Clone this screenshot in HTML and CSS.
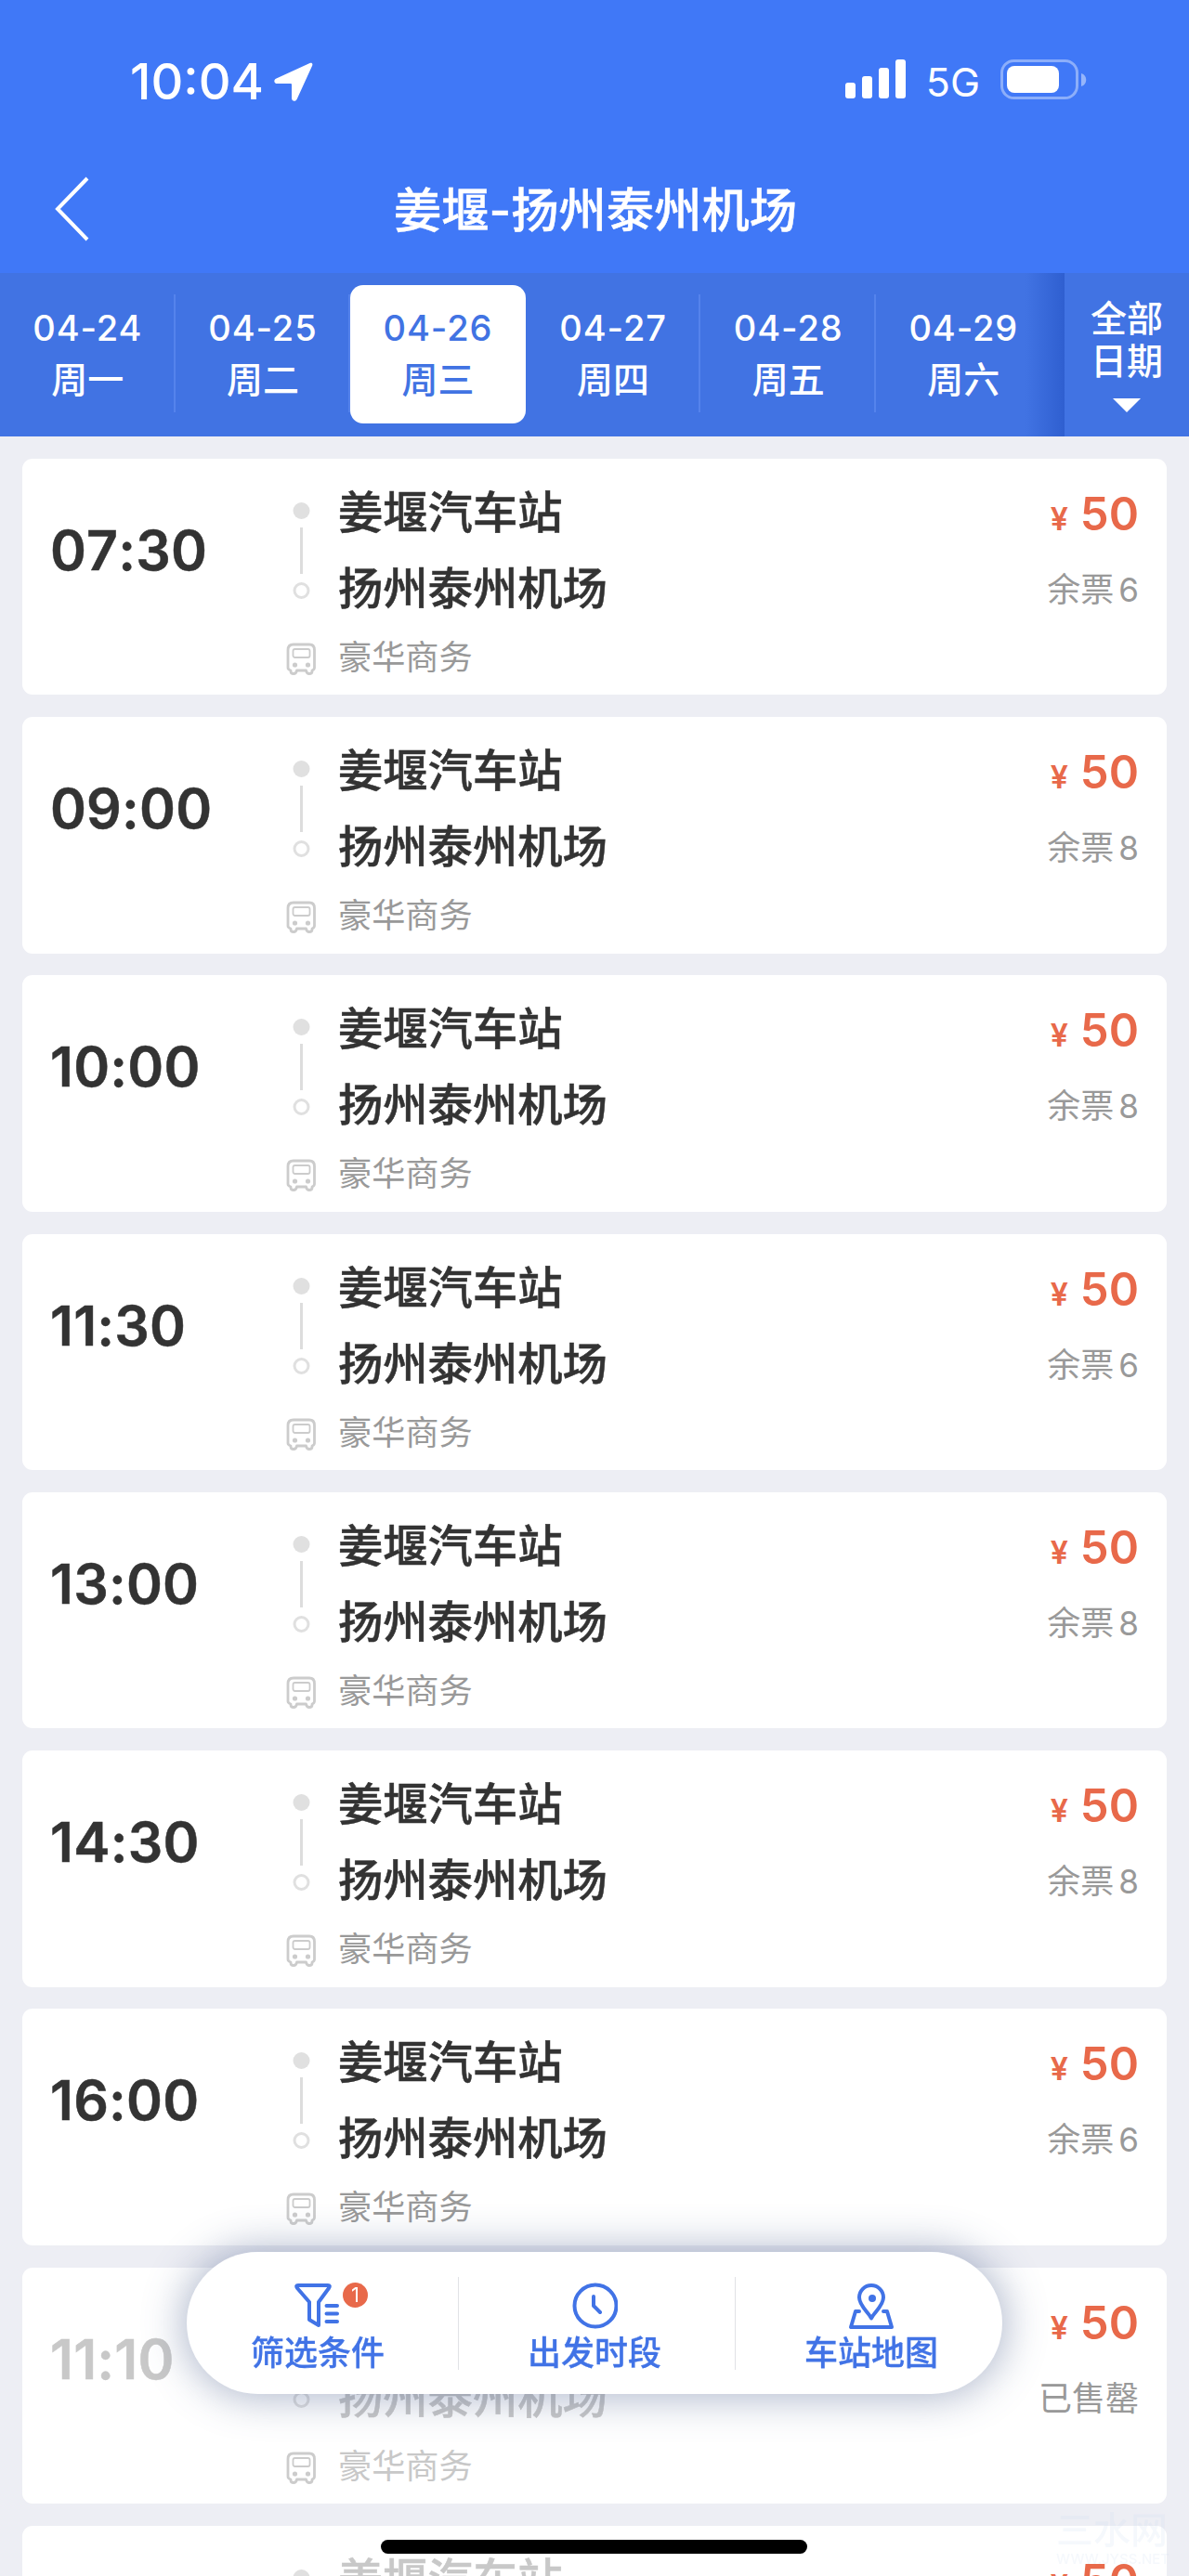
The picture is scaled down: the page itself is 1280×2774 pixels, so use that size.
FILE: index.html
```html
<!doctype html>
<html lang="zh-CN">
  <head>
    <meta charset="UTF-8" />
    <meta name="viewport" content="width=device-width, initial-scale=1.0" />
    <title>姜堰-扬州泰州机场</title>
    <link rel="stylesheet" href="styles.css" />
  </head>
  <body>
    <header class="header">
      <div class="status-bar">
        <div class="status-left">
          <span class="clock">10:04</span>
          <svg class="location" width="42" height="42" viewBox="0 0 42 42">
            <path d="M38.5 1 2.5 17.5C-.8 19-.2 23 3.5 23H18q1 0 1 1V38.5c0 3.800 4.300 4.500 5.800 1L41 4C42.200 1.500 40.500 0 38.500 1Z" fill="#fff" />
          </svg>
        </div>
        <div class="status-right">
          <svg width="65" height="42" viewBox="0 0 65 42" fill="#fff">
            <rect x="0" y="25" width="11" height="17" rx="3" />
            <rect x="18" y="18" width="11" height="24" rx="3" />
            <rect x="36" y="9" width="11" height="33" rx="3" />
            <rect x="54" y="0" width="11" height="42" rx="3" />
          </svg>
          <span class="network">5G</span>
          <svg width="93" height="44" viewBox="0 0 93 44">
            <rect x="1.500" y="1.500" width="81" height="40" rx="13" fill="none" stroke="#fff" stroke-opacity=".4" stroke-width="3" />
            <rect x="7" y="7" width="56" height="29" rx="8" fill="#fff" />
            <path d="M87 15c7 2 7 12 0 14Z" fill="#fff" fill-opacity=".45" />
          </svg>
        </div>
      </div>
      <div class="nav-bar">
        <svg class="back" width="38" height="70" viewBox="0 0 38 70">
          <path d="M36 2 4 35 36 68" fill="none" stroke="#fff" stroke-width="4" />
        </svg>
        <h1>姜堰-扬州泰州机场</h1>
      </div>
    </header>

    <nav class="dates">
      <div class="date-list">
        <div class="date"><span>04-24</span><b>周一</b></div>
        <div class="date"><span>04-25</span><b>周二</b></div>
        <div class="date active"><span>04-26</span><b>周三</b></div>
        <div class="date"><span>04-27</span><b>周四</b></div>
        <div class="date"><span>04-28</span><b>周五</b></div>
        <div class="date"><span>04-29</span><b>周六</b></div>
      </div>
      <div class="all-dates">
        <span>全部</span>
        <span>日期</span>
        <i class="caret"></i>
      </div>
    </nav>

    <main class="trips" id="trips"></main>

    <div class="toolbar">
      <div class="tool">
        <svg width="50" height="50" viewBox="0 0 50 50" fill="none" stroke="#4173e6" stroke-width="4" stroke-linecap="round" stroke-linejoin="round">
          <path d="M4 3H36Q39 3 37 6L26 21V46L16 40V21L3 6Q1 3 4 3Z" />
          <path d="M34.500 25H46M34.500 33.500H46M34.500 42H46" />
        </svg>
        <span>筛选条件</span>
        <em class="badge">1</em>
      </div>
      <div class="tool">
        <svg width="50" height="50" viewBox="0 0 50 50" fill="none" stroke="#4173e6" stroke-width="4" stroke-linecap="round" stroke-linejoin="round">
          <circle cx="26" cy="25" r="22.500" />
          <path d="M24 15V25L31 32" />
        </svg>
        <span>出发时段</span>
      </div>
      <div class="tool">
        <svg width="50" height="50" viewBox="0 0 50 50" fill="none" stroke="#4173e6" stroke-width="4" stroke-linecap="round" stroke-linejoin="round">
          <path d="M25 38.500C22 32 12 25 12 16A13 13 0 0 1 38 16C38 25 28 32 25 38.500Z" />
          <circle cx="26" cy="17" r="4" fill="#4173e6" stroke="none" />
          <path d="M12 31H8L3 48H47L42 31H38" />
        </svg>
        <span>车站地图</span>
      </div>
    </div>
    <div class="watermark">
      <span>三水网</span>
      <small>WWW.JYSS.NET</small>
    </div>
    <div class="home-indicator"></div>

    <script src="main.js"></script>
  </body>
</html>
```
FILE: styles.css
```css
* {
  box-sizing: border-box;
}
body {
  margin: 0;
  height: 2774px;
  overflow: hidden;
  background-color: #edeef4;
  font-family: Inter, "Noto Sans CJK SC", sans-serif;
  color: #333;
}
.header {
  height: 294px;
  background-color: #4078f7;
  color: #fff;
}
.status-bar {
  display: flex;
  justify-content: space-between;
  height: 156px;
  padding: 64px 110px 0 140px;
}
.status-left,
.status-right {
  display: flex;
  align-items: flex-start;
}
.clock {
  font-size: 54px;
  font-weight: 500;
  line-height: 47px;
}
.location {
  margin: 3px 0 0 11px;
}
.network {
  margin: 0 22px 0 22px;
  font-size: 43px;
  line-height: 48px;
}
.nav-bar {
  display: flex;
  align-items: center;
  height: 138px;
  padding: 0 58px;
}
.back {
  flex: none;
}
h1 {
  flex: 1;
  margin: 1px 36px 0 0;
  text-align: center;
  font-size: 51.3px;
  font-weight: 500;
  line-height: 60px;
  -webkit-text-stroke: 0.4px;
}

.dates {
  display: flex;
  height: 176px;
  background-color: #4173e3;
  color: #fff;
}
.date-list {
  flex: 1;
  display: flex;
  padding-top: 13px;
  background: linear-gradient(to left, #2f5fd0, rgba(65, 115, 227, 0) 42px);
}
.date {
  flex: none;
  display: flex;
  flex-direction: column;
  align-items: center;
  width: 188.6px;
  height: 149px;
  padding-top: 22px;
  background: linear-gradient(#5583ec, #5583ec) no-repeat right 10px / 2px 127px;
  font-size: 38px;
  font-weight: 500;
}
.date:last-child {
  background: none;
}
.date span {
  line-height: 48px;
  letter-spacing: 0.9px;
}
.date b {
  margin-top: 5px;
  font-size: 39px;
  font-weight: 500;
  line-height: 54px;
}
.date.active {
  border-radius: 14px;
  background: #fff;
  color: #4173e3;
}
.all-dates {
  display: flex;
  flex-direction: column;
  align-items: center;
  width: 134px;
  padding-top: 26px;
  font-size: 39px;
  font-weight: 500;
  line-height: 46px;
}
.caret {
  margin-top: 17px;
  border: 15px solid transparent;
  border-top-color: #fff;
  border-bottom: 0;
}

.trips {
  display: flex;
  flex-direction: column;
  gap: 23.7px;
  padding: 23.7px 24px 0;
}
.trip {
  flex: none;
  display: flex;
  height: 254.6px;
  padding-right: 30px;
  border-radius: 11px;
  background-color: #fff;
}
.time {
  width: 284px;
  padding: 69px 0 0 30px;
  font-size: 59px;
  font-weight: 600;
  font-kerning: none;
  line-height: 60px;
  letter-spacing: 0.2px;
  -webkit-text-stroke: 0.5px;
}
.route-icon {
  flex: none;
  width: 34px;
  height: 240px;
}
.stations {
  flex: 1;
  padding: 17px 0 0 22px;
}
.stations p {
  margin: 0;
  height: 82px;
  font-size: 48.3px;
  font-weight: 500;
  line-height: 82px;
  -webkit-text-stroke: 0.5px;
}
.stations .service {
  height: 66px;
  color: #999;
  font-size: 36.2px;
  font-weight: 400;
  line-height: 66px;
  -webkit-text-stroke: 0;
}
.fare {
  text-align: right;
  padding-top: 30px;
}
.price {
  color: #e8694a;
  font-size: 49px;
  font-weight: 600;
  line-height: 60px;
}
.price small {
  margin-right: 13px;
  font-size: 34px;
  font-weight: 600;
}
.left {
  margin-top: 16px;
  color: #999;
  font-size: 36px;
  font-weight: 400;
  line-height: 60px;
}
.left span {
  margin-left: 5px;
  font-size: 35px;
}
.sold-out .time,
.sold-out .stations p {
  color: #c8c8c8;
}

.toolbar {
  position: fixed;
  left: 201px;
  top: 2425px;
  display: flex;
  justify-content: center;
  width: 878px;
  height: 153px;
  border-radius: 77px;
  background-color: #fff;
  box-shadow: 0 0 44px 4px rgba(63, 83, 130, 0.42);
  color: #4173e6;
}
.tool {
  position: relative;
  flex: none;
  display: flex;
  flex-direction: column;
  align-items: center;
  width: 298px;
  padding: 33px 0 0;
  font-size: 36px;
  font-weight: 500;
  -webkit-text-stroke: 0.3px;
}
.tool + .tool {
  background: linear-gradient(#e1e2e6, #e1e2e6) no-repeat 2px 27px / 1px 100px;
}
.tool span {
  line-height: 52px;
}
.badge {
  position: absolute;
  left: 176px;
  top: 33px;
  width: 27px;
  height: 27px;
  border-radius: 50%;
  background-color: #e8694a;
  color: #fff;
  font-size: 22px;
  font-style: normal;
  font-weight: 400;
  line-height: 27px;
  text-align: center;
  -webkit-text-stroke: 0;
}
.watermark {
  position: fixed;
  left: 1137px;
  top: 2703px;
  display: flex;
  flex-direction: column;
  width: 120px;
  color: rgba(205, 220, 240, 0.2);
  font-size: 40px;
  font-weight: 500;
  line-height: 44px;
}
.watermark small {
  font-size: 15px;
  font-weight: 500;
  line-height: 17px;
  white-space: nowrap;
}
.home-indicator {
  position: fixed;
  left: 410px;
  top: 2735px;
  width: 459px;
  height: 15px;
  border-radius: 8px;
  background-color: #000;
}
```
FILE: main.js
```js
const trips = [
  { time: "07:30", left: 6 },
  { time: "09:00", left: 8 },
  { time: "10:00", left: 8 },
  { time: "11:30", left: 6 },
  { time: "13:00", left: 8 },
  { time: "14:30", left: 8 },
  { time: "16:00", left: 6 },
  { time: "11:10", left: 0 },
  { time: "", left: 0 },
];

// stop markers on top, bus at the bottom
const routeIcon = `
  <svg class="route-icon" viewBox="0 0 34 240" fill="none">
    <circle cx="16.5" cy="56" r="9" fill="#e0e0e0" />
    <path d="M16.5 74V124" stroke="#ddd" stroke-width="3" />
    <circle cx="16.5" cy="142" r="7.500" stroke="#e0e0e0" stroke-width="3" />
    <g stroke="#ccc" stroke-width="2.800" stroke-linejoin="round">
      <path d="M8 200H25Q30.500 200 30.500 206V225Q30.500 227 28 228V229Q28 231.500 25 231.500Q22 231.500 21.500 228H11.500Q11 231.500 8 231.500Q5 231.500 5 229V228Q2 227 2 225V206Q2 200 8 200Z" />
      <rect x="7.500" y="205" width="18" height="9" rx="2" stroke-width="1.800" />
    </g>
    <circle cx="9.500" cy="222" r="2.600" fill="#ccc" />
    <circle cx="23.500" cy="222" r="2.600" fill="#ccc" />
  </svg>`;

document.getElementById("trips").innerHTML = trips
  .map(
    (trip) => `
    <section class="trip ${trip.left ? "" : "sold-out"}">
      <div class="time">${trip.time}</div>
      ${routeIcon}
      <div class="stations">
        <p>姜堰汽车站</p>
        <p>扬州泰州机场</p>
        <p class="service">豪华商务</p>
      </div>
      <div class="fare">
        <div class="price"><small>¥</small>50</div>
        <div class="left">${trip.left ? `余票<span>${trip.left}</span>` : "已售罄"}</div>
      </div>
    </section>`
  )
  .join("");
```
